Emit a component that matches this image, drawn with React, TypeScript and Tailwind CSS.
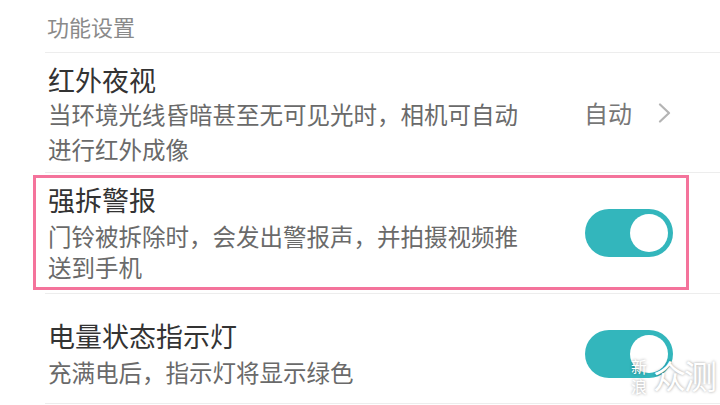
const FONT = "font-['Noto_Sans_CJK_SC','Noto_Sans',sans-serif]";

function Toggle() {
  return (
    <div className="w-[88px] h-[48px] rounded-full bg-[#33b6bc] flex items-center justify-end pr-[5px] shrink-0">
      <span className="w-[38px] h-[38px] rounded-full bg-white" />
    </div>
  );
}

function Divider() {
  return <div className="ml-[45px] h-px bg-[#ededed]" />;
}

export default function App() {
  return (
    <div className={`w-[720px] h-[405px] bg-white relative overflow-hidden ${FONT}`}>
      {/* Section header */}
      <div className="h-[52px] pl-[47px] flex items-center text-[22px] text-[#8a8a8a]">
        功能设置
      </div>
      <Divider />

      {/* Night vision */}
      <div className="h-[119px] pl-[48px] pr-[48px] flex items-center">
        <div className="flex-1 pt-[6px]">
          <div className="text-[27px] leading-[32px] text-[#333]">红外夜视</div>
          <div className="mt-[1px] text-[23.5px] leading-[35px] text-[#6a6a6a] w-[480px]">
            当环境光线昏暗甚至无可见光时，相机可自动进行红外成像
          </div>
        </div>
        <div className="flex items-center">
          <span className="text-[24px] text-[#777]">自动</span>
          <svg width="14" height="20" viewBox="0 0 14 20" className="ml-[26px]">
            <polyline points="2,1.5 11,10 2,18.5" fill="none" stroke="#b4b4b4" strokeWidth="2.2" strokeLinecap="round" strokeLinejoin="round" />
          </svg>
        </div>
      </div>
      <Divider />

      {/* Tamper alarm, highlighted */}
      <div className="mt-[2px] ml-[33px] w-[656px] h-[115px] border-[3px] border-[#f4739b] pl-[12px] pr-[13px] flex items-center">
        <div className="flex-1 pt-[2px]">
          <div className="text-[27px] leading-[30px] text-[#333]">强拆警报</div>
          <div className="mt-[6px] text-[23.5px] leading-[31px] text-[#6a6a6a] w-[480px]">
            门铃被拆除时，会发出警报声，并拍摄视频推送到手机
          </div>
        </div>
        <Toggle />
      </div>
      <div className="mt-[3px]">
        <Divider />
      </div>

      {/* Battery indicator */}
      <div className="h-[109px] pl-[48px] pr-[47px] flex items-center">
        <div className="flex-1 pt-[14px]">
          <div className="text-[27px] leading-[30px] text-[#333]">电量状态指示灯</div>
          <div className="mt-[4px] text-[23.5px] leading-[35px] text-[#6a6a6a]">
            充满电后，指示灯将显示绿色
          </div>
        </div>
        <div className="pt-[10px]">
          <Toggle />
        </div>
      </div>
      <Divider />

      {/* Watermark */}
      <div className="absolute left-[631px] top-[356px] flex items-start text-white [text-shadow:0_0_3px_rgba(0,0,0,0.4)]">
        <div className="flex flex-col text-[16px] leading-[20px]">
          <span>新</span>
          <span>浪</span>
        </div>
        <span className="ml-[6px] text-[33px] leading-[38px] tracking-[-2px]">众测</span>
      </div>
    </div>
  );
}
